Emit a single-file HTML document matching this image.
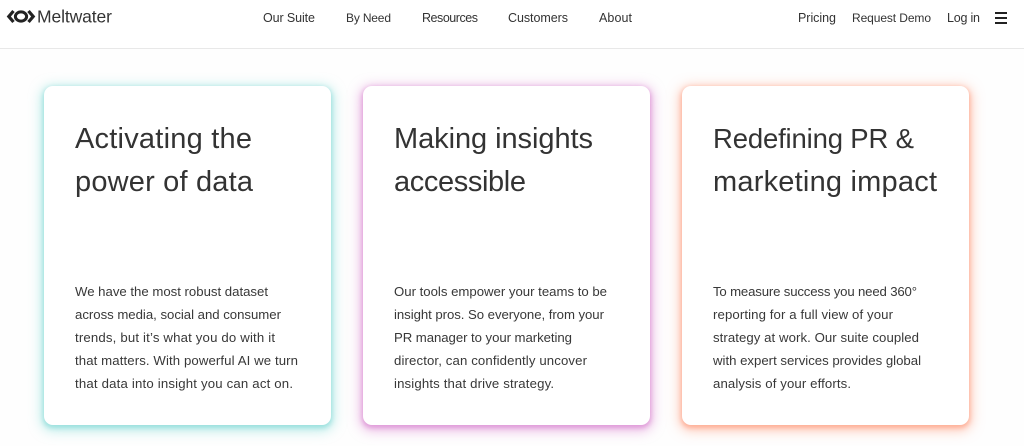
<!DOCTYPE html>
<html lang="en">
<head>
<meta charset="utf-8">
<title>Meltwater</title>
<style>
html,body{margin:0;padding:0;width:1024px;height:446px;overflow:hidden;background:#fefefe}
.bar{position:absolute;left:0;top:0;width:1024px;height:48px;background:#fff;border-bottom:1px solid #e8e8e8}
.card{position:absolute;top:86px;width:287px;height:339px;background:#fff;border-radius:9px}
.a{left:44px;box-shadow:0 2px 5px 1px rgba(125,215,212,.6),0 3px 12px 3px rgba(130,221,217,.5)}
.b{left:363px;box-shadow:0 2px 5px 1px rgba(214,125,205,.6),0 3px 12px 3px rgba(219,130,210,.5)}
.c{left:682px;box-shadow:0 2px 5px 1px rgba(255,150,118,.6),0 3px 12px 3px rgba(255,160,130,.5)}
svg{position:absolute;left:0;top:0}
text{font-family:"Liberation Sans",sans-serif;fill:#333}
.n{font-size:12.5px;fill:#333}
.h{font-size:29px;fill:#333}
.p{font-size:13.2px;fill:#383838}
</style>
</head>
<body>
<div class="bar"></div>
<div class="card a"></div>
<div class="card b"></div>
<div class="card c"></div>
<svg width="1024" height="446" viewBox="0 0 1024 446" xmlns="http://www.w3.org/2000/svg">
  <path d="M13.5 11L8.8 16.5L13.5 22" fill="none" stroke="#222" stroke-width="3.2"/>
  <path d="M28.5 11L33.2 16.5L28.5 22" fill="none" stroke="#222" stroke-width="3.2"/>
  <ellipse cx="21" cy="16.5" rx="5.6" ry="4.6" fill="none" stroke="#222" stroke-width="3"/>
  <text x="37" y="22.5" font-size="17.5" textLength="75" style="fill:#333">Meltwater</text>

  <text class="n" x="263" y="22" textLength="52">Our Suite</text>
  <text class="n" x="346" y="22" textLength="45" style="font-size:12px">By Need</text>
  <text class="n" x="422" y="22" textLength="56">Resources</text>
  <text class="n" x="508" y="22" textLength="60">Customers</text>
  <text class="n" x="599" y="22" textLength="33">About</text>
  <text class="n" x="798" y="22" textLength="38">Pricing</text>
  <text class="n" x="852" y="22" textLength="79" style="font-size:12px">Request Demo</text>
  <text class="n" x="947" y="22" textLength="33">Log in</text>
  <path d="M995 13h12M995 18h12M995 23h12" stroke="#222" stroke-width="2" fill="none"/>

  <text class="h" x="75" y="148" textLength="177">Activating the</text>
  <text class="h" x="75" y="191" textLength="178">power of data</text>
  <text class="p" x="75" y="296" textLength="193">We have the most robust dataset</text>
  <text class="p" x="75" y="319" textLength="206">across media, social and consumer</text>
  <text class="p" x="75" y="342" textLength="200">trends, but it’s what you do with it</text>
  <text class="p" x="75" y="365" textLength="223">that matters. With powerful AI we turn</text>
  <text class="p" x="75" y="388" textLength="218">that data into insight you can act on.</text>

  <text class="h" x="394" y="148" textLength="199">Making insights</text>
  <text class="h" x="394" y="191" textLength="132">accessible</text>
  <text class="p" x="394" y="296" textLength="213">Our tools empower your teams to be</text>
  <text class="p" x="394" y="319" textLength="210">insight pros. So everyone, from your</text>
  <text class="p" x="394" y="342" textLength="178">PR manager to your marketing</text>
  <text class="p" x="394" y="365" textLength="193">director, can confidently uncover</text>
  <text class="p" x="394" y="388" textLength="160">insights that drive strategy.</text>

  <text class="h" x="713" y="148" textLength="201" style="font-size:27.5px">Redefining PR &amp;</text>
  <text class="h" x="713" y="191" textLength="224">marketing impact</text>
  <text class="p" x="713" y="296" textLength="204">To measure success you need 360°</text>
  <text class="p" x="713" y="319" textLength="180">reporting for a full view of your</text>
  <text class="p" x="713" y="342" textLength="206">strategy at work. Our suite coupled</text>
  <text class="p" x="713" y="365" textLength="208">with expert services provides global</text>
  <text class="p" x="713" y="388" textLength="138">analysis of your efforts.</text>
</svg>
</body>
</html>
